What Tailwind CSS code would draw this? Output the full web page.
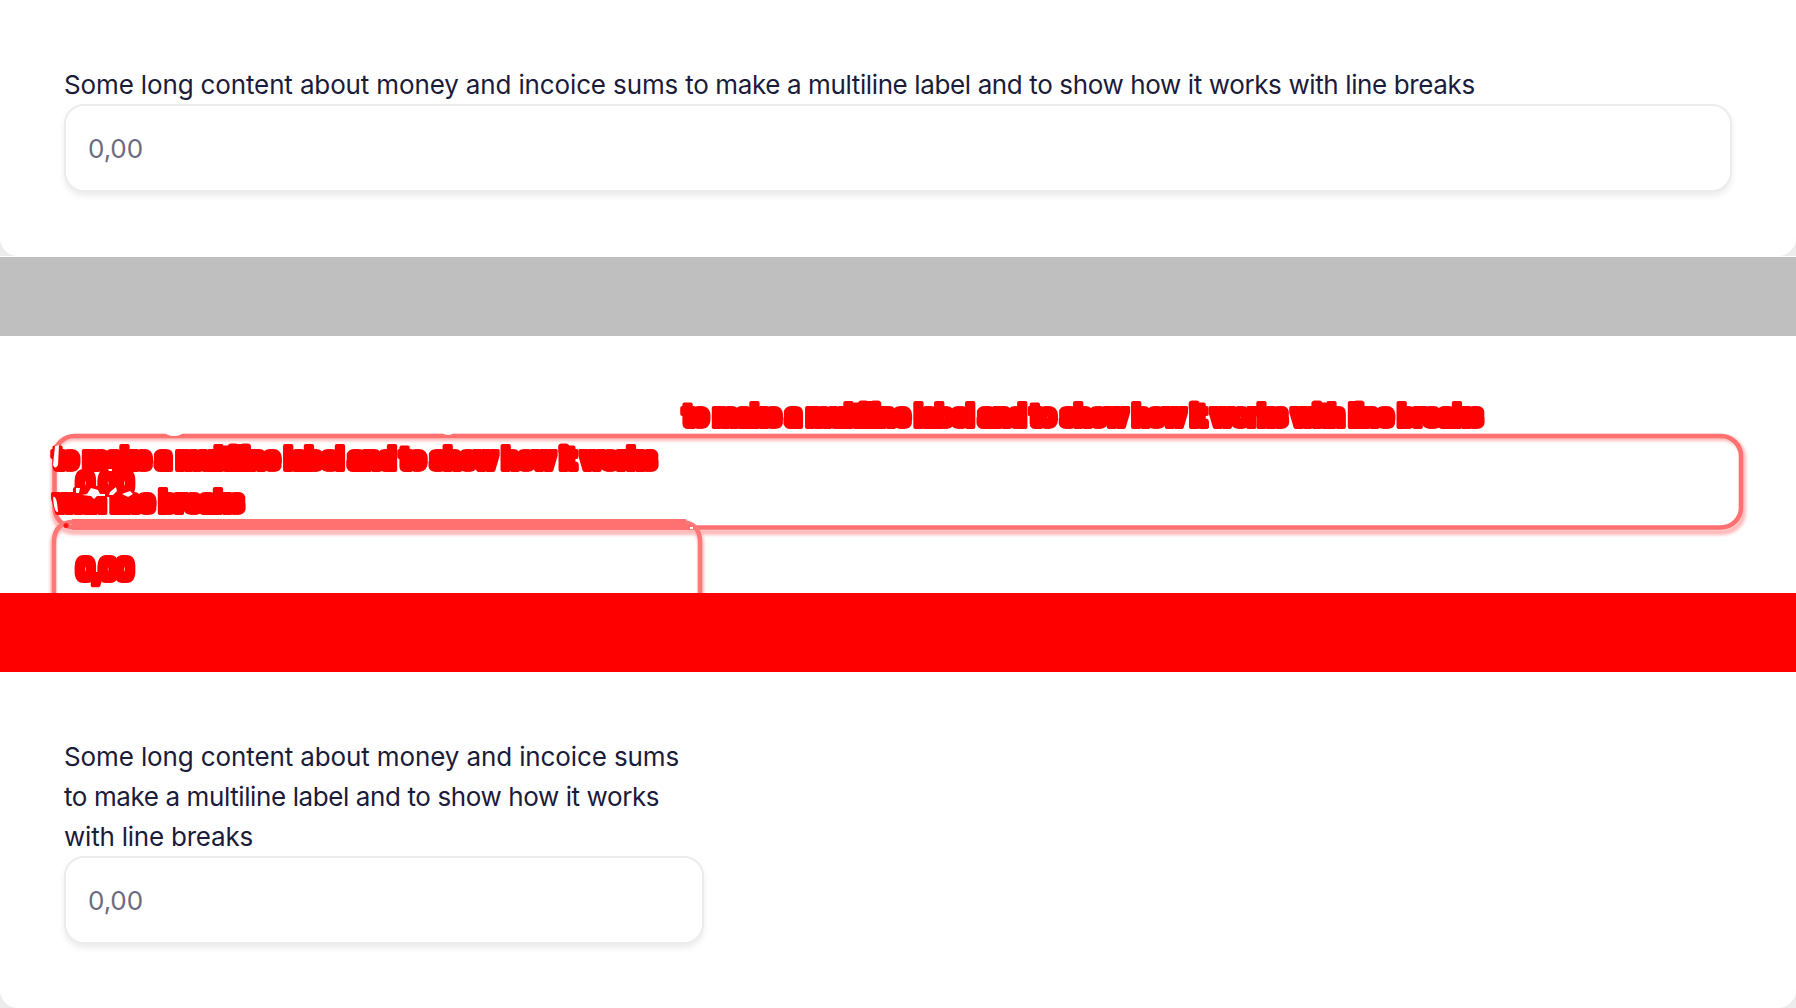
<!DOCTYPE html>
<html lang="en">
<head>
<meta charset="utf-8">
<title>Money input comparison</title>
<script src="https://cdn.jsdelivr.net/npm/@tailwindcss/browser@4"></script>
</head>
<body class="flex h-[1008px] w-[1796px] flex-col overflow-hidden bg-white font-['Inter',sans-serif] text-[26px] leading-10 text-[#1b1b3a]">
  <section class="h-[257px] shrink-0 bg-white">
    <div class="h-[256px] bg-[#ececec]">
      <div class="h-full rounded-b-[18px] bg-white px-16 pt-[65px]">
        <p class="-mb-px whitespace-nowrap tracking-[-0.38px]"><span class="tracking-[-0.14px]">Some long content about money and incoice sums </span>to make a multiline label and to show how it works with line breaks</p>
        <div class="flex h-[88px] items-center rounded-[20px] border-2 border-[#ececec] bg-white px-[22px] pt-[2px] text-[#6c6c80] shadow-[0_4px_6px_rgba(0,0,0,0.08)]"><span class="tracking-[-0.1px]">0,00</span></div>
      </div>
    </div>
  </section>
  <div class="h-[79px] shrink-0 bg-[#bfbfbf]"></div>
  <section class="h-[257px] shrink-0 bg-white">
    <svg class="block" width="1796" height="257" viewBox="0 336 1796 257">
      <defs>
        <filter id="soft" x="-5%" y="-20%" width="110%" height="140%"><feGaussianBlur stdDeviation="1.6"/></filter>
        <filter id="edge" x="-5%" y="-20%" width="110%" height="140%"><feGaussianBlur stdDeviation="0.6"/></filter>
        <filter id="thick" x="-5%" y="-20%" width="110%" height="140%" color-interpolation-filters="sRGB"><feMorphology operator="dilate" radius="2"/><feGaussianBlur stdDeviation="0.5"/></filter>
      </defs>
      <g fill="none">
        <g stroke="#ffb9b9" stroke-width="6" filter="url(#soft)">
          <rect x="54" y="438" width="1689" height="94" rx="20"/>
          <rect x="53" y="524" width="648" height="94" rx="20"/>
        </g>
        <g filter="url(#edge)">
          <rect x="54.500" y="436" width="1686.500" height="91.500" rx="20" stroke="#ff7070" stroke-width="4.500"/>
          <path d="M54 600V542Q54 522 74 522H680Q700 522 700 542V600" stroke="#ff7878" stroke-width="4.500"/>
          <path d="M72 522H686M72 527H690" stroke="#ff7070" stroke-width="6"/>
        </g>
      </g>
      <ellipse cx="174" cy="432" rx="9" ry="4" fill="#fff"/>
      <ellipse cx="448" cy="431" rx="6" ry="4" fill="#fff"/>
      <g filter="url(#thick)" font-size="26.500" word-spacing="-1" fill="#f00" stroke="#f00" stroke-width="4" stroke-linejoin="round">
        <text x="684" y="424.500" textLength="798" lengthAdjust="spacing">to make a multiline label and to show how it works with line breaks</text>
        <text x="54" y="467.500" textLength="602" lengthAdjust="spacing">to make a multiline label and to show how it works</text>
        <text x="54" y="510.500" textLength="189" lengthAdjust="spacing">with line breaks</text>
        <text x="77" y="493" textLength="56" lengthAdjust="spacing">0,00</text>
        <text x="77" y="578.500" textLength="56" lengthAdjust="spacing">0,00</text>
      </g>
      <g fill="#fff">
        <path d="M55 446l4-1-1 20q-3 5-5 0z"/>
        <path d="M53 497q4-2 5 15q-4 1-5-15z"/>
        <path d="M76 488h4l-1 5h-3zM108 469h4v2h-3z"/>
        <path d="M82 495l5-1 4-6 7 2 2 4 5 0v2l-8 0-3 3-3-3zM110 492l6-5 1 4-4 4-4 0zM122 494l8-3 3 3-5 3z"/>
        <path d="M690 527h3v2h-3z"/>
      </g>
      <circle cx="66" cy="525.500" r="2.500" fill="#ff1515"/>
    </svg>
  </section>
  <div class="h-[79px] shrink-0 bg-[#ff0000]"></div>
  <section class="h-[336px] shrink-0 bg-[#ececec]">
    <div class="h-full rounded-b-[18px] bg-white px-16 pt-[65px]">
      <p class="-mb-px whitespace-nowrap"><span class="tracking-[-0.12px]">Some long content about money and incoice sums</span><br><span class="tracking-[-0.4px]">to make a multiline label and to show how it works</span><br><span class="tracking-[-0.22px]">with line breaks</span></p>
      <div class="flex h-[88px] w-[640px] items-center rounded-[20px] border-2 border-[#ececec] bg-white px-[22px] pt-[2px] text-[#6c6c80] shadow-[0_4px_6px_rgba(0,0,0,0.08)]"><span class="tracking-[-0.1px]">0,00</span></div>
    </div>
  </section>
</body>
</html>
